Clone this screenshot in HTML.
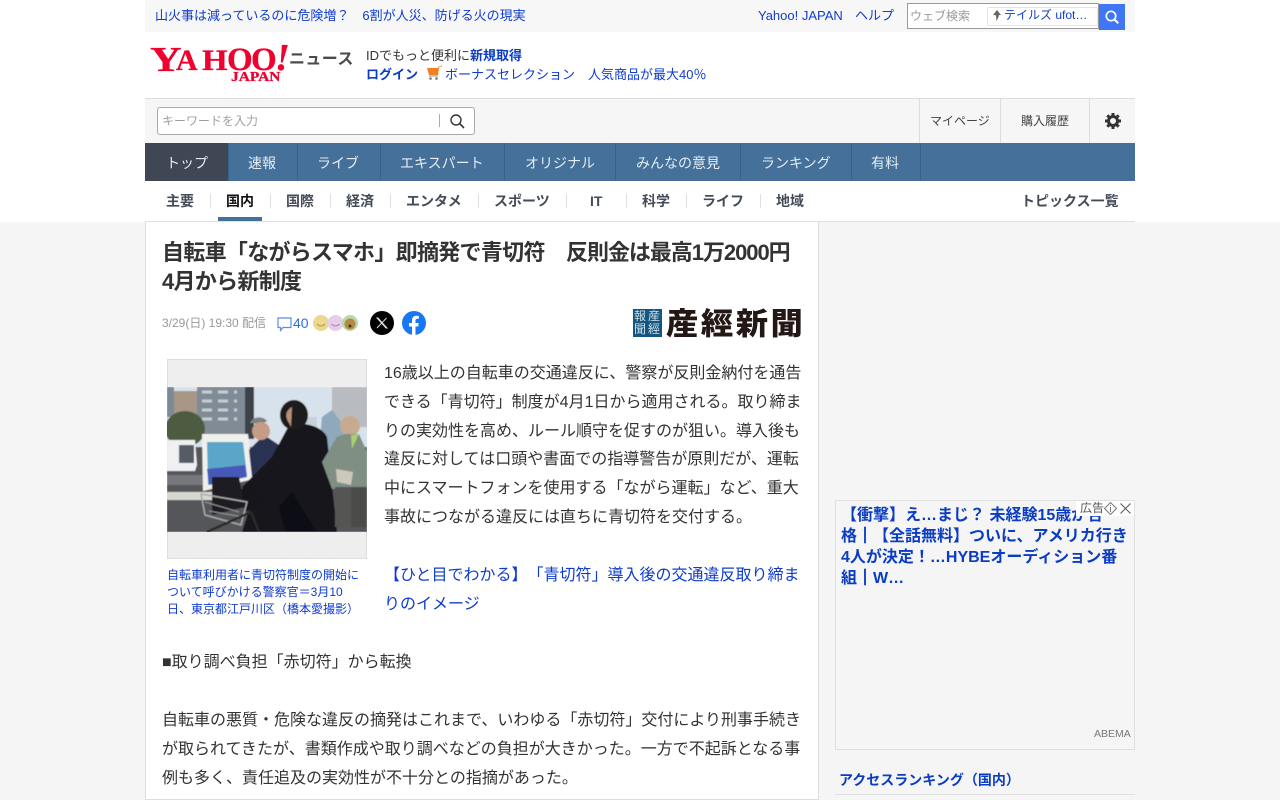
<!DOCTYPE html>
<html lang="ja"><head><meta charset="utf-8"><title>自転車「ながらスマホ」即摘発で青切符</title>
<style>
html,body{margin:0;padding:0;width:1280px;height:800px;overflow:hidden;background:#fff}
body{font-family:"Liberation Sans","Noto Sans CJK JP",sans-serif;position:relative;color:#333;text-spacing-trim:space-all;font-feature-settings:"chws" 0,"palt" 0}
.a{position:absolute;white-space:nowrap}
.b{position:absolute}
.l{color:#0f3ccf}
.n{color:#e6edf3;font-size:14px;top:153px;line-height:20px}
.s{font-size:14px;font-weight:bold;color:#444c58;top:191px;line-height:20px}
.d{position:absolute;top:194px;width:1px;height:14px;background:#e0e0e0}
.v{position:absolute;top:143px;width:1px;height:38px;background:#3a6286}
.p{font-size:16px;line-height:28.8px;color:#333}
.y{position:absolute;font-family:"Liberation Serif",serif;font-weight:bold;color:#f0002e;transform-origin:0 0;line-height:1;-webkit-text-stroke:.3px #f0002e}
.bar{font-family:"IPAGothic",sans-serif;line-height:1}
</style></head><body>
<div class="b" style="left:0;top:222px;width:1280px;height:578px;background:#f5f5f5"></div>
<div class="b" style="left:145px;top:0;width:990px;height:32px;background:#f7f7f7"></div>
<div class="a l" style="left:155px;top:6px;font-size:13px;line-height:20px">山火事は減っているのに危険増？　6割が人災、防げる火の現実</div>
<div class="a l" style="left:758px;top:6px;font-size:13px;line-height:20px">Yahoo! JAPAN</div>
<div class="a l" style="left:855px;top:6px;font-size:13px;line-height:20px">ヘルプ</div>
<div class="b" style="left:907px;top:3px;width:190px;height:24px;border:1px solid #999;background:#fff"></div>
<div class="a" style="left:910px;top:7px;font-size:12px;line-height:18px;color:#999">ウェブ検索</div>
<div class="b" style="left:987px;top:7px;width:109px;height:17px;border:1px solid #e3e3e3;border-radius:2px;background:#fff"></div>
<svg class="b" style="left:992px;top:10px" width="10" height="12" viewBox="0 0 10 12"><path d="M5 0L9 5H7C6.500 7 6 9 4 11C4.500 9 4.500 7 3.500 5H1z" fill="#666"/></svg>
<div class="a l" style="left:1004px;top:7px;font-size:12px;line-height:17px">テイルズ ufot…</div>
<div class="b" style="left:1099px;top:4px;width:26px;height:26px;background:#3f76f6"></div>
<svg class="b" style="left:1104px;top:9px" width="16" height="16" viewBox="0 0 16 16"><circle cx="7" cy="7" r="4.700" fill="none" stroke="#fff" stroke-width="1.700"/><path d="M10.500 10.500L14.300 14.300" stroke="#fff" stroke-width="2"/></svg>

<span class="y" style="left:150px;top:42px;font-size:35px;transform:scaleX(1.25)">Y</span>
<span class="y" style="left:176px;top:46px;font-size:30px">A</span>
<span class="y" style="left:202px;top:46px;font-size:30px;transform:scaleX(1.1)">H</span>
<span class="y" style="left:227px;top:44px;font-size:33px">O</span>
<span class="y" style="left:251px;top:44px;font-size:33px">O</span>
<i class="y" style="left:275px;top:39px;font-size:38px">!</i>
<div class="y a" style="left:231px;top:71px;font-size:14px;transform:scaleX(1.1)">JAPAN</div>
<div class="a" style="left:289px;top:49px;font-size:16px;font-weight:bold;line-height:22px;color:#4a4a4a;letter-spacing:.4px">ニュース</div>
<div class="a" style="left:366px;top:46px;font-size:13px;line-height:20px;color:#333">IDでもっと便利に<b style="color:#0a3cc4">新規取得</b></div>
<div class="a" style="left:366px;top:65px;font-size:13px;line-height:20px;font-weight:bold;color:#0a3cc4">ログイン</div>
<svg class="b" style="left:426px;top:65px" width="18" height="16" viewBox="0 0 18 16"><path d="M1 3H13L12 10H3z" fill="#f08020"/><path d="M12 3L13.500 1.500L16 1" fill="none" stroke="#f0a050" stroke-width="1"/><path d="M3 11H12" stroke="#888" stroke-width="1"/><circle cx="4.500" cy="13.500" r="1.300" fill="#777"/><circle cx="10.500" cy="13.500" r="1.300" fill="#777"/></svg>
<div class="a l" style="left:445px;top:65px;font-size:13px;line-height:20px">ボーナスセレクション　人気商品が最大40％</div>

<div class="b" style="left:145px;top:98px;width:990px;height:45px;background:#f6f6f6;border-top:1px solid #ddd;box-sizing:border-box"></div>
<div class="b" style="left:157px;top:107px;width:316px;height:26px;border:1px solid #aaa;border-radius:3px;background:#fff"></div>
<div class="a" style="left:162px;top:112px;font-size:12px;line-height:18px;color:#a0a0a0">キーワードを入力</div>
<div class="b" style="left:439px;top:114px;width:1px;height:13px;background:#aaa"></div>
<svg class="b" style="left:449px;top:113px" width="16" height="16" viewBox="0 0 16 16"><circle cx="7" cy="7" r="5" fill="none" stroke="#333" stroke-width="1.400"/><path d="M10.600 10.600L15 15" stroke="#333" stroke-width="1.600"/></svg>
<div class="b" style="left:919px;top:99px;width:1px;height:44px;background:#ddd"></div>
<div class="b" style="left:1000px;top:99px;width:1px;height:44px;background:#ddd"></div>
<div class="b" style="left:1089px;top:99px;width:1px;height:44px;background:#ddd"></div>
<div class="a" style="left:930px;top:112px;font-size:12px;line-height:18px;color:#444">マイページ</div>
<div class="a" style="left:1021px;top:112px;font-size:12px;line-height:18px;color:#444">購入履歴</div>
<svg class="b" style="left:1105px;top:113px" width="16" height="16" viewBox="0 0 16 16"><circle cx="8" cy="8" r="4.500" fill="none" stroke="#333" stroke-width="3"/><path d="M8 0V3M8 13V16M0 8H3M13 8H16M2.300 2.300L4.500 4.500M11.500 11.500L13.700 13.700M2.300 13.700L4.500 11.500M11.500 4.500L13.700 2.300" stroke="#333" stroke-width="3"/></svg>

<div class="b" style="left:145px;top:143px;width:990px;height:38px;background:#44709a"></div>
<div class="b" style="left:145px;top:143px;width:83px;height:38px;background:#3f4654"></div>
<i class="v" style="left:228px"></i><i class="v" style="left:297px"></i><i class="v" style="left:380px"></i><i class="v" style="left:504px"></i><i class="v" style="left:615px"></i><i class="v" style="left:740px"></i><i class="v" style="left:851px"></i><i class="v" style="left:920px"></i>
<div class="a n" style="left:166px">トップ</div>
<div class="a n" style="left:248px">速報</div>
<div class="a n" style="left:317px">ライブ</div>
<div class="a n" style="left:400px">エキスパート</div>
<div class="a n" style="left:525px">オリジナル</div>
<div class="a n" style="left:636px">みんなの意見</div>
<div class="a n" style="left:761px">ランキング</div>
<div class="a n" style="left:871px">有料</div>

<div class="b" style="left:145px;top:181px;width:990px;height:41px;background:#fff;border-bottom:1px solid #e0e0e0;box-sizing:border-box"></div>
<div class="a s" style="left:166px">主要</div><i class="d" style="left:210px"></i>
<div class="a s" style="left:226px;color:#111">国内</div><i class="d" style="left:270px"></i>
<div class="a s" style="left:286px">国際</div><i class="d" style="left:330px"></i>
<div class="a s" style="left:346px">経済</div><i class="d" style="left:390px"></i>
<div class="a s" style="left:406px">エンタメ</div><i class="d" style="left:478px"></i>
<div class="a s" style="left:494px">スポーツ</div><i class="d" style="left:566px"></i>
<div class="a s" style="left:590px">IT</div><i class="d" style="left:626px"></i>
<div class="a s" style="left:642px">科学</div><i class="d" style="left:686px"></i>
<div class="a s" style="left:702px">ライフ</div><i class="d" style="left:760px"></i>
<div class="a s" style="left:776px">地域</div>
<div class="a s" style="left:1021px">トピックス一覧</div>
<div class="b" style="left:218px;top:217px;width:44px;height:4px;background:#44709a"></div>

<div class="b" style="left:145px;top:222px;width:674px;height:578px;background:#fff;border:1px solid #ddd;border-top:0;box-sizing:border-box"></div>
<div class="a" style="left:162px;top:238px;font-size:22px;line-height:29px;font-weight:bold;color:#333;letter-spacing:-.7px">自転車「ながらスマホ」即摘発で青切符　<span style="letter-spacing:-1.05px">反則金は最高1万2000円</span><br>4月から新制度</div>

<div class="a" style="left:162px;top:314px;font-size:12px;line-height:18px;color:#999">3/29(日) 19:30 配信</div>
<svg class="b" style="left:277px;top:317px" width="15" height="15" viewBox="0 0 15 15"><path d="M1 1H14V10.500H6L3.500 13.500V10.500H1z" fill="none" stroke="#5b8de0" stroke-width="1.200"/></svg>
<div class="a" style="left:293px;top:313px;font-size:14px;line-height:20px;color:#2f6fd8">40</div>
<svg class="b" style="left:313px;top:315px" width="45" height="16" viewBox="0 0 45 16"><circle cx="8" cy="8" r="8" fill="#e9d88e"/><path d="M4 9Q8 13 12 9" fill="none" stroke="#b89c40"/><circle cx="22.500" cy="8" r="8" fill="#e6cdea"/><path d="M18.500 9Q22.500 13 26.500 9" fill="none" stroke="#b080c8"/><circle cx="37" cy="8" r="8" fill="#b9d8a8"/><ellipse cx="37" cy="9" rx="5.500" ry="5.500" fill="#b58a45"/><circle cx="37" cy="11" r="1.500" fill="#4a3010"/></svg>
<div class="b" style="left:370px;top:311px;width:24px;height:24px;border-radius:50%;background:#000"></div>
<svg class="b" style="left:376px;top:317px" width="12" height="12" viewBox="0 0 12 12"><path d="M1 1L10 11H11L2 1zM10.500 1L1 11" fill="none" stroke="#ddd" stroke-width="1"/></svg>
<svg class="b" style="left:402px;top:311px" width="24" height="24" viewBox="0 0 24 24"><circle cx="12" cy="12" r="12" fill="#1877f2"/><path d="M10 24V15.500H7V12H10V9.300C10 6.300 11.800 4.700 14.500 4.700C15.800 4.700 16.800 4.900 16.800 4.900V7.800H15.400C13.900 7.800 13.500 8.700 13.500 9.600V12H16.700L16.200 15.500H13.500V24z" fill="#fff"/></svg>

<div class="b" style="left:633px;top:309px;width:29px;height:28px;background:#14567f"></div>
<div class="a" style="left:634px;top:310px;width:13px;font-size:12px;line-height:13px;color:#cfe0ea;white-space:normal">報<br>聞</div>
<div class="a" style="left:648px;top:310px;width:13px;font-size:12px;line-height:13px;color:#cfe0ea;white-space:normal">産<br>經</div>
<div class="a" style="left:666px;top:305px;font-family:'Noto Sans CJK JP',sans-serif;font-size:32px;line-height:36px;font-weight:900;color:#231815;letter-spacing:2.500px;transform:scale(1.010,.95);transform-origin:0 0">産經新聞</div>

<div class="b" style="left:167px;top:359px;width:198px;height:198px;background:#eee;border:1px solid #ddd"></div>
<svg class="b" style="left:167px;top:387px;overflow:hidden" width="200" height="145" viewBox="0 0 200 145">
<defs><filter id="f" x="0" y="0" width="100%" height="100%"><feGaussianBlur stdDeviation=".5"/></filter></defs>
<g filter="url(#f)">
<rect width="200" height="145" fill="#d8e2ec"/>
<rect x="0" y="0" width="7" height="30" fill="#7d8a96"/>
<rect x="7" y="4" width="30" height="30" fill="#a89686"/>
<rect x="30" y="0" width="50" height="50" fill="#808b96"/>
<path d="M35 5H70M35 14H70M35 23H70M35 32H70" stroke="#c5ccd4" stroke-width="3" stroke-dasharray="10 6"/>
<rect x="78" y="0" width="9" height="52" fill="#3c4248"/>
<rect x="120" y="30" width="30" height="20" fill="#c9d2dc"/>
<rect x="165" y="0" width="35" height="40" fill="#b8bbc0"/>
<ellipse cx="18" cy="42" rx="20" ry="18" fill="#4d5c40"/>
<rect x="0" y="60" width="200" height="85" fill="#55565a"/>
<rect x="0" y="88" width="60" height="10" fill="#77787c"/>
<path d="M0 105H50V113H0z" fill="#d8d8d2"/>
<path d="M0 53H28L30 78L28 84H0z" fill="#eef0f2"/>
<rect x="12" y="58" width="15" height="18" fill="#555c66"/>
<path d="M155 30L165 23L178 40V85H150z" fill="#8ea8bc"/>
<rect x="150" y="65" width="22" height="20" fill="#3a7fb0"/>
<path d="M35 47H81L87 92L36 104z" fill="#f0f0ec"/>
<path d="M40 55H76L80 88L41 98z" fill="#5aa6c8"/>
<path d="M40 82L78 78L80 90L42 98z" fill="#4658b8"/>
<path d="M82 63L97 48L115 60L112 100H105L100 145H90L88 118L85 90z" fill="#2b3252"/>
<path d="M83 36C85 30 95 28 100 34L95 37z" fill="#7c8284"/>
<ellipse cx="94" cy="44" rx="9" ry="9" fill="#c59c84"/>
<path d="M75 145L83 120L75 100L105 70L120 42C130 32 155 38 160 50L170 145z" fill="#15161a"/>
<ellipse cx="127" cy="28" rx="14" ry="15" fill="#1a1a1e"/>
<path d="M122 36C118 30 118 24 125 20L124 40z" fill="#b98f78"/>
<path d="M118 145L112 120L125 105L150 145z" fill="#101012"/>
<path d="M65 106L80 100L92 112L80 125z" fill="#121214"/>
<path d="M45 90L72 90L78 120L45 128z" fill="#1c1c20"/>
<path d="M34 107L80 115L74 138L38 128z" fill="none" stroke="#aaa" stroke-width="1.500"/>
<path d="M38 115L72 125M42 124L76 130" stroke="#999" stroke-width="1"/>
<path d="M40 145L84 125L92 145" fill="none" stroke="#2a2a2a" stroke-width="2.500"/>
<ellipse cx="183" cy="39" rx="10" ry="10" fill="#c8aa90"/>
<path d="M170 50L178 47L192 47L200 65V102H165L155 75z" fill="#7f8f84"/>
<path d="M184 48L192 47L185 62z" fill="#a8d070"/>
<rect x="168" y="100" width="17" height="40" fill="#555452"/>
<rect x="184" y="100" width="16" height="40" fill="#4c4b48"/>
<path d="M169 82L186 85L184 98L170 95z" fill="#ccc9bc"/>
</g></svg>
<div class="a" style="left:167px;top:567px;font-size:12px;line-height:17px;color:#0f3ccf">自転車利用者に青切符制度の開始に<br>ついて呼びかける警察官＝3月10<br>日、東京都江戸川区（橋本愛撮影）</div>

<div class="a p" style="left:384px;top:360px">16歳以上の自転車の交通違反に、警察が反則金納付を通告<br>できる「青切符」制度が4月1日から適用される。取り締ま<br>りの実効性を高め、ルール順守を促すのが狙い。導入後も<br>違反に対しては口頭や書面での指導警告が原則だが、運転<br>中にスマートフォンを使用する「ながら運転」など、重大<br>事故につながる違反には直ちに青切符を交付する。</div>
<div class="a p" style="left:384px;top:562px;color:#0f3ccf">【ひと目でわかる】「青切符」導入後の交通違反取り締ま<br>りのイメージ</div>
<div class="a p" style="left:162px;top:649px">■取り調べ負担「赤切符」から転換</div>
<div class="a p" style="left:162px;top:707px">自転車の悪質・危険な違反の摘発はこれまで、いわゆる「赤切符」交付により刑事手続き<br>が取られてきたが、書類作成や取り調べなどの負担が大きかった。一方で不起訴となる事<br>例も多く、責任追及の実効性が不十分との指摘があった。</div>

<div class="b" style="left:835px;top:500px;width:298px;height:248px;background:#f5f5f5;border:1px solid #e0e0e0"></div>
<div class="a" style="left:841px;top:505px;font-size:16px;line-height:21px;font-weight:bold;color:#0a3cc4">【衝撃】え…まじ？ 未経験15歳が合<br>格<span class="bar">｜</span>【全話無料】ついに、アメリカ行き<br>4人が決定！…HYBEオーディション番<br>組<span class="bar">｜</span>W…</div>
<div class="b" style="left:1076px;top:501px;width:58px;height:15px;background:#fff"></div>
<div class="a" style="left:1080px;top:500px;font-size:12px;line-height:17px;color:#555">広告</div>
<svg class="b" style="left:1104px;top:502px" width="13" height="13" viewBox="0 0 13 13"><path d="M6.500 .5L12.500 6.500L6.500 12.500L.5 6.500z" fill="none" stroke="#777"/><path d="M6.500 5V10M6.500 3V4" stroke="#777"/></svg>
<svg class="b" style="left:1120px;top:503px" width="11" height="11" viewBox="0 0 11 11"><path d="M.5 .5L10.500 10.500M10.500 .5L.5 10.500" stroke="#555" stroke-width="1"/></svg>
<div class="a" style="left:1094px;top:727px;font-size:10.500px;line-height:14px;color:#777">ABEMA</div>
<div class="a" style="left:839px;top:770px;font-size:14px;line-height:21px;font-weight:bold;color:#0a3cc4">アクセスランキング（国内）</div>
<div class="b" style="left:835px;top:794px;width:300px;height:1px;background:#e0e0e0"></div>
</body></html>
